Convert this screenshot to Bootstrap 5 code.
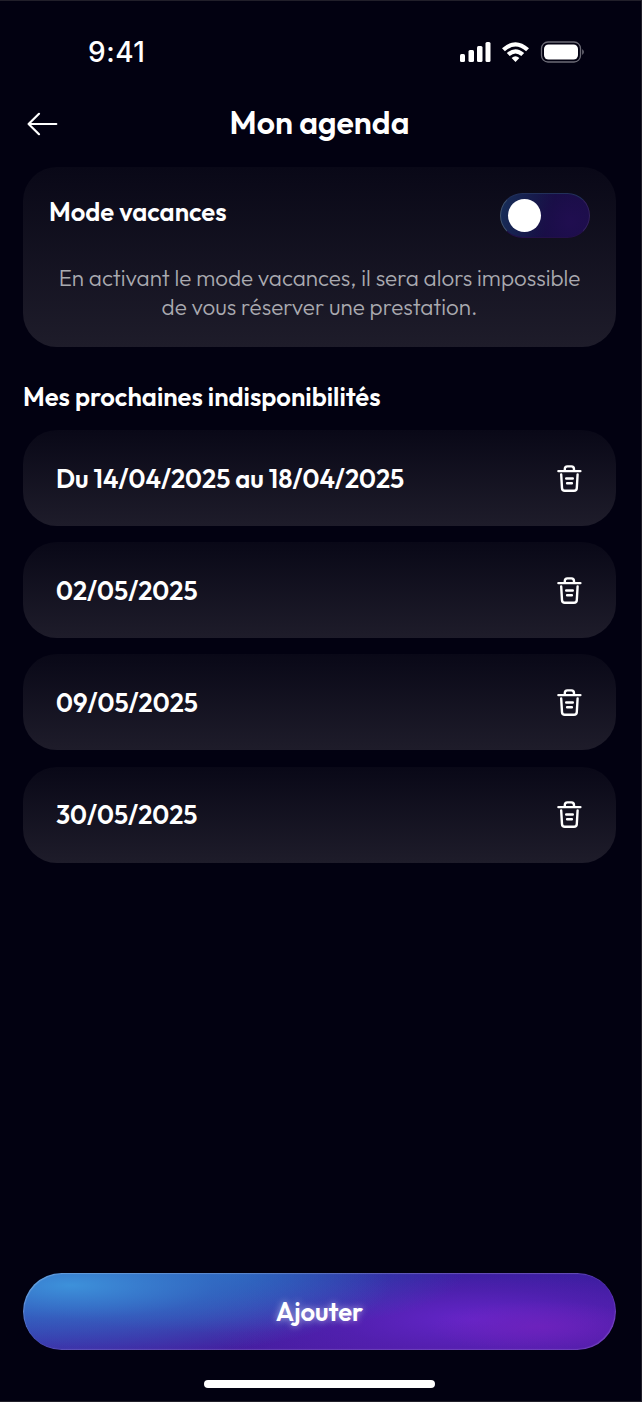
<!DOCTYPE html>
<html lang="fr">
<head>
<meta charset="utf-8">
<meta name="viewport" content="width=device-width, initial-scale=1">
<title>Mon agenda</title>
<link href="https://cdn.jsdelivr.net/npm/bootstrap@5.3.0/dist/css/bootstrap.min.css" rel="stylesheet">
<style>
body{background:#020111;color:#fff;font-family:Outfit,Lato,"Open Sans",sans-serif;font-weight:600}
.screen{height:1402px;border:solid #211f2a;border-width:1px 1px 1px 0;padding:0 25px 0 23px;overflow:hidden}
.statusbar{height:100px;margin:0 31px 0 65px;padding-top:2px}
.clock{font:500 28px/32px Inter,sans-serif;letter-spacing:.5px}
.topbar{height:46px}
.topbar h1{font-size:32px;line-height:42px;font-weight:600}
.back{left:4px;top:11px}
.panel{background:linear-gradient(#090817,#1e1c2a);border-radius:34px}
.mode{height:180px;margin-top:20px;padding:26px 26px 0}
.mode h2,.section-title{font-size:25.6px;line-height:32px;font-weight:600}
.mode h2{margin-top:3px}
.hint{font-size:22.4px;line-height:29px;font-weight:300;color:#aaaab0;margin:26px -10px 0;white-space:nowrap}
.toggle{width:90px;height:45px;border:1px solid;border-color:#22305a #34215d #241049 #40536f;padding:5px 7px;background:radial-gradient(circle at 80% 65%,#200e50,transparent 55%),linear-gradient(105deg,#172f59,#160e43 55%,#1a0d47)}
.knob{width:33px;height:33px}
.section-title{margin:34px 0 17px}
.slots{gap:16.2px}
.slot{height:96px;padding:1px 34px 0 33px}
.slot span{font-size:25.6px;line-height:32px}
.add{height:77px;border:0;color:#fff;font-size:25.6px;font-weight:600;padding:2px 0 0;text-shadow:0 0 7px #ffffff90;
box-shadow:inset 1px 1px 1px #ffffff38,inset -1px -1px 1px #ffffff28;
background:radial-gradient(ellipse 320px 75px at 8% 16%,#3d91da,#397dce90 45%,transparent),radial-gradient(ellipse 240px 60px at 34% 0%,#2367bdc0,transparent),radial-gradient(ellipse 110px 26px at 87% 70%,#7222bdc0,transparent),radial-gradient(ellipse 280px 60px at 76% 60%,#6425c8,#5c22bb90 50%,transparent),linear-gradient(175deg,#4c1ba000 30%,#4c1ba0 90%),linear-gradient(100deg,#2c37aa,#32209a 50%,#2f1d98)}
.homebar{width:231px;height:8px;margin:30px auto 13px}
</style>
</head>
<body>
<svg class="d-none"><symbol id="trash" viewBox="0 0 26 30"><g fill="none" stroke="#fff" stroke-width="2.4" stroke-linecap="round" stroke-linejoin="round"><path d="M2.400 7.100h22M8.800 7V5.200Q8.800 2.400 11.400 2.400h4Q18 2.400 18 5.200V7M5.200 10.500l.8 13.600q.2 2.700 2.800 2.700h9.200q2.600 0 2.800-2.700l.8-13.600M10.200 14.500h6.600M11.100 19.300h4.800"/></g></symbol></svg>
<main class="screen d-flex flex-column">
  <div class="statusbar d-flex align-items-center justify-content-between flex-shrink-0">
    <span class="clock">9:41</span>
    <svg width="126" height="24" viewBox="0 0 126 24" fill="#fff">
      <rect x="1" y="14" width="5" height="8" rx="1.500"/><rect x="9.500" y="10" width="5.500" height="12" rx="1.500"/><rect x="18" y="6" width="5.500" height="16" rx="1.500"/><rect x="26.500" y="2" width="5" height="20" rx="1.500"/>
      <path d="M43 8.300Q56.500-4 70 8.300l-2.900 3q-10.600-9.500-21.200 0zM47.800 13.100q8.700-7.700 17.400 0l-2.900 3q-5.800-5-11.600 0zM52.600 17.900q3.900-3.200 7.800 0l-3.900 4z"/>
      <rect x="82.500" y="2" width="39" height="20" rx="6.500" fill="none" stroke="#6c6b76" stroke-width="1.300"/><rect x="85" y="4.500" width="34" height="15" rx="4.500"/><path d="M123.200 9q3.400 3 0 6z" fill="#6c6b76"/>
    </svg>
  </div>
  <header class="topbar position-relative text-center flex-shrink-0">
    <svg class="back position-absolute" width="31" height="24" viewBox="0 0 31 24" fill="none" stroke="#fff" stroke-width="2.200" stroke-linecap="round" stroke-linejoin="round"><path d="M29.300 12H1.600M12 1.800 1.600 12 12 22.200"/></svg>
    <h1 class="m-0">Mon agenda</h1>
  </header>
  <section class="panel mode flex-shrink-0">
    <div class="d-flex justify-content-between align-items-start">
      <h2 class="mb-0">Mode vacances</h2>
      <div class="toggle rounded-pill" role="switch" aria-checked="false"><div class="knob bg-white rounded-circle"></div></div>
    </div>
    <p class="hint text-center">En activant le mode vacances, il sera alors impossible<br>de vous réserver une prestation.</p>
  </section>
  <h2 class="section-title">Mes prochaines indisponibilités</h2>
  <div class="slots d-grid">
    <div class="panel slot d-flex align-items-center justify-content-between"><span>Du 14/04/2025 au 18/04/2025</span><svg width="26" height="30"><use href="#trash"/></svg></div>
    <div class="panel slot d-flex align-items-center justify-content-between"><span>02/05/2025</span><svg width="26" height="30"><use href="#trash"/></svg></div>
    <div class="panel slot d-flex align-items-center justify-content-between"><span>09/05/2025</span><svg width="26" height="30"><use href="#trash"/></svg></div>
    <div class="panel slot d-flex align-items-center justify-content-between"><span>30/05/2025</span><svg width="26" height="30"><use href="#trash"/></svg></div>
  </div>
  <button class="add btn rounded-pill w-100 mt-auto flex-shrink-0">Ajouter</button>
  <div class="homebar bg-white rounded-pill flex-shrink-0"></div>
</main>
<script src="https://cdn.jsdelivr.net/npm/bootstrap@5.3.0/dist/js/bootstrap.bundle.min.js"></script>
</body>
</html>
